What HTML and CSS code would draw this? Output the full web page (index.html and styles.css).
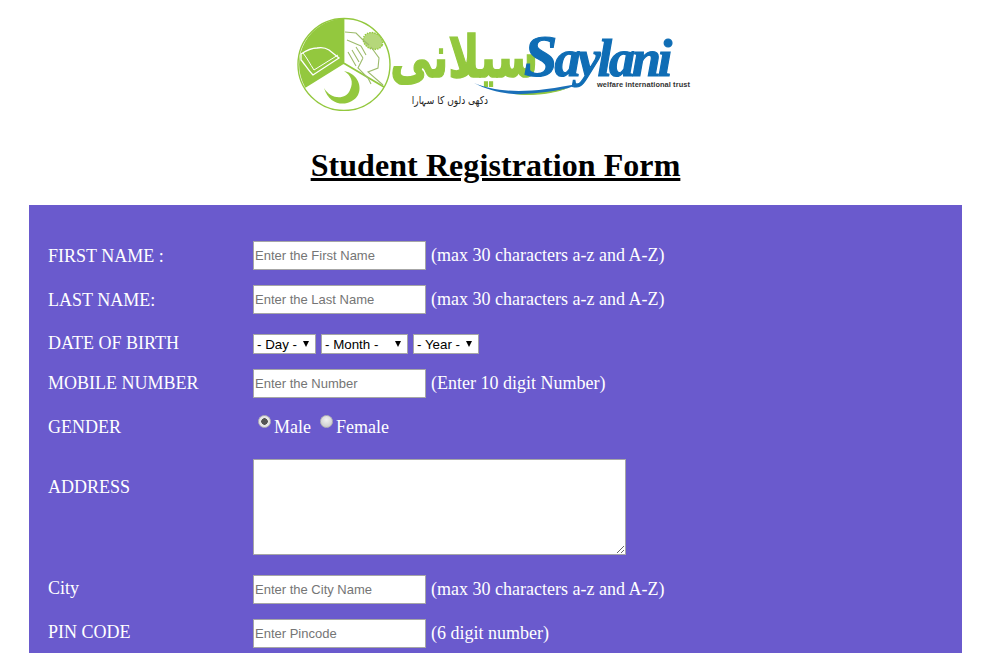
FILE: index.html
```html
<!DOCTYPE html>
<html lang="en">
<head>
<meta charset="utf-8">
<title>Student Registration Form</title>
<link rel="stylesheet" href="styles.css">
</head>
<body>
<div class="page">
  <header class="brand">
    <svg class="logo" width="400" height="100" viewBox="0 0 400 100" role="img" aria-label="Saylani welfare international trust">
      <g transform="translate(-295 -11)">
        <circle cx="343" cy="64.5" r="46" fill="#fff" stroke="#93c83e" stroke-width="1.4"/>
        <path d="M342.500 18.500 A46 46 0 0 0 304 87 L342.500 63 Z" fill="#93c83e"/>
        <path d="M342.500 18 V63 L304 87 M342.500 63 L383 87" fill="none" stroke="#93c83e" stroke-width="1.8"/>
        <path d="M300 54 C306 50 311 48 316 48 C321 47 325 48 328 50 L338 58 L312 75 C307 70 303 63 300 60 Z" fill="none" stroke="#fff" stroke-width="1.3"/>
        <path d="M302 53 C306 58 309 64 313 70 L337 55" fill="none" stroke="#fff" stroke-width="1"/>
        <path d="M343 71 C358 74 361 88 357 95 C350 107 329 108 323 88 C330 100 345 100 349 90 C353 82 350 75 343 71 Z" fill="#93c83e"/>
        <ellipse class="beads" cx="372" cy="41" rx="10" ry="8" transform="rotate(25 372 41)"/>
        <path class="hand" d="M344 32 L355 33 L362 40 L368 45 M347 52 L355 66 M351 50 L358 62 M355 47 L362 58 M360 46 L365 55 M346 40 L360 46 M370 47 L378 58 L377 68 L367 72 L382 85 M362 58 L357 68 L367 78 L370 84"/>
        <text class="logo-urdu" transform="translate(537 77) scale(.72 1)" text-anchor="end">سیلانی</text>
        <text class="logo-latin" x="523" y="76"><tspan class="logo-cap">S</tspan>aylani</text>
        <text class="logo-trust" x="596" y="87">welfare international trust</text>
        <path d="M473 83 C495 92 525 95 580 83 C550 97 505 100 473 83 Z" fill="#1a6fb8"/>
        <path d="M513 94 C530 94 550 92 567 88 C550 95 530 96 513 94 Z" fill="#93c83e"/>
        <text class="logo-tag" transform="translate(487 104) scale(.82 1)" text-anchor="end">دکھی دلوں کا سہارا</text>
      </g>
    </svg>
  </header>
  <h1 class="title">Student Registration Form</h1>
  <form class="panel">
    <div class="row row-text">
      <label class="label label-low">FIRST NAME :</label>
      <div class="field"><input class="text" type="text" placeholder="Enter the First Name"><span class="hint">(max 30 characters a-z and A-Z)</span></div>
    </div>
    <div class="row row-text">
      <label class="label label-low">LAST NAME:</label>
      <div class="field"><input class="text" type="text" placeholder="Enter the Last Name"><span class="hint">(max 30 characters a-z and A-Z)</span></div>
    </div>
    <div class="row row-date">
      <label class="label">DATE OF BIRTH</label>
      <div class="field dates">
        <span class="pick pick-day">- Day -</span>
        <span class="pick pick-month">- Month -</span>
        <span class="pick pick-year">- Year -</span>
      </div>
    </div>
    <div class="row row-text">
      <label class="label">MOBILE NUMBER</label>
      <div class="field"><input class="text" type="text" placeholder="Enter the Number"><span class="hint">(Enter 10 digit Number)</span></div>
    </div>
    <div class="row row-gender">
      <label class="label">GENDER</label>
      <div class="field genders">
        <span class="radio radio-on"></span><span class="opt opt-male">Male</span>
        <span class="radio"></span><span class="opt">Female</span>
      </div>
    </div>
    <div class="row row-address">
      <label class="label label-address">ADDRESS</label>
      <div class="field"><textarea class="area"></textarea></div>
    </div>
    <div class="row row-text">
      <label class="label label-high">City</label>
      <div class="field"><input class="text" type="text" placeholder="Enter the City Name"><span class="hint">(max 30 characters a-z and A-Z)</span></div>
    </div>
    <div class="row row-text">
      <label class="label label-high">PIN CODE</label>
      <div class="field"><input class="text" type="text" placeholder="Enter Pincode"><span class="hint">(6 digit number)</span></div>
    </div>
  </form>
</div>
</body>
</html>
```
FILE: styles.css
```css
html, body { margin: 0; padding: 0; height: 653px; overflow: hidden; background: #fff; }
body { font-family: "Liberation Serif", serif; }
.page { width: 991px; }
.brand { display: flex; justify-content: center; padding-top: 11px; height: 100px; }
.logo { display: block; margin-left: 1px; }
.beads { fill: #b5d77a; stroke: #93c83e; stroke-width: 1.5; stroke-dasharray: 1.5 1; }
.hand { fill: none; stroke: #9dbb6c; stroke-width: 1.1; }
.logo-urdu { font-family: "DejaVu Sans", sans-serif; font-size: 58px; font-weight: 700; fill: #93c83e; stroke: #93c83e; stroke-width: 1.5px; }
.logo-latin { font-family: "Liberation Serif", serif; font-style: italic; font-weight: 700; font-size: 52px; letter-spacing: -3px; fill: #0f6db5; stroke: #0f6db5; stroke-width: 1.2px; }
.logo-cap { font-size: 60px; }
.logo-trust { font-family: "Liberation Sans", sans-serif; font-weight: 700; font-size: 7.4px; letter-spacing: .1px; fill: #333; }
.logo-tag { font-family: "DejaVu Sans", sans-serif; font-size: 11px; fill: #222; }
.title { margin: 36px 0 0; height: 58px; font-size: 32px; line-height: 37px; font-weight: 700; letter-spacing: .07px; text-align: center; text-decoration: underline; color: #000; }
.panel { background: #6a5acd; width: 933px; margin-left: 29px; height: 460px; padding: 36px 0 0 19px; box-sizing: border-box; color: #fff; font-size: 18px; }
.row { display: flex; }
.row-text { height: 29px; margin-bottom: 15px; }
.row-date { height: 20px; margin: 20px 0 15px; }
.row-gender { height: 22px; margin: 17px 0 22px; }
.row-address { height: 96px; margin-bottom: 20px; }
.label { width: 205px; flex: none; line-height: 28px; }
.label-low { line-height: 30px; }
.label-high { line-height: 26px; }
.row-date .label { line-height: 18px; }
.row-gender .label { line-height: 22px; margin-top: 1px; }
.label-address { margin-top: 14px; }
.field { display: flex; align-items: center; }
.text { width: 173px; height: 29px; box-sizing: border-box; border: 1px solid #a6a6a6; background: #fff; padding: 0 0 0 1px; margin: 0; font: 13px "Liberation Sans", sans-serif; outline: 0; border-radius: 0; }
.text::placeholder { color: #757575; opacity: 1; }
.hint { margin: 0 0 2px 5px; line-height: 28px; }
.dates { gap: 5px; align-items: flex-start; }
.pick { position: relative; display: block; box-sizing: border-box; height: 20px; border: 1px solid #a6a6a6; background: #fff; color: #000; font: 13.33px/18px "Liberation Sans", sans-serif; padding: 1px 0 0 3px; }
.pick::after { content: ""; position: absolute; right: 6px; top: 6px; border-left: 3.5px solid transparent; border-right: 3.5px solid transparent; border-top: 6px solid #000; }
.pick-day { width: 63px; }
.pick-month { width: 87px; }
.pick-year { width: 66px; }
.genders { align-items: flex-start; line-height: 22px; }
.radio { flex: none; box-sizing: border-box; width: 13px; height: 13px; margin: 0 3px 0 5px; border-radius: 50%; border: 1px solid #b5b5b5; background: radial-gradient(circle at 50% 35%, #f2f2f2, #c4c4c4); }
.radio-on { background: radial-gradient(circle, #555 0 3px, #e6e6e6 3.5px); }
.opt { margin-top: 1px; }
.opt-male { margin-right: 4px; }
.area { display: block; width: 373px; height: 96px; box-sizing: border-box; border: 1px solid #a6a6a6; background: #fff; margin: 0; padding: 2px; outline: 0; border-radius: 0; resize: both; }
```
